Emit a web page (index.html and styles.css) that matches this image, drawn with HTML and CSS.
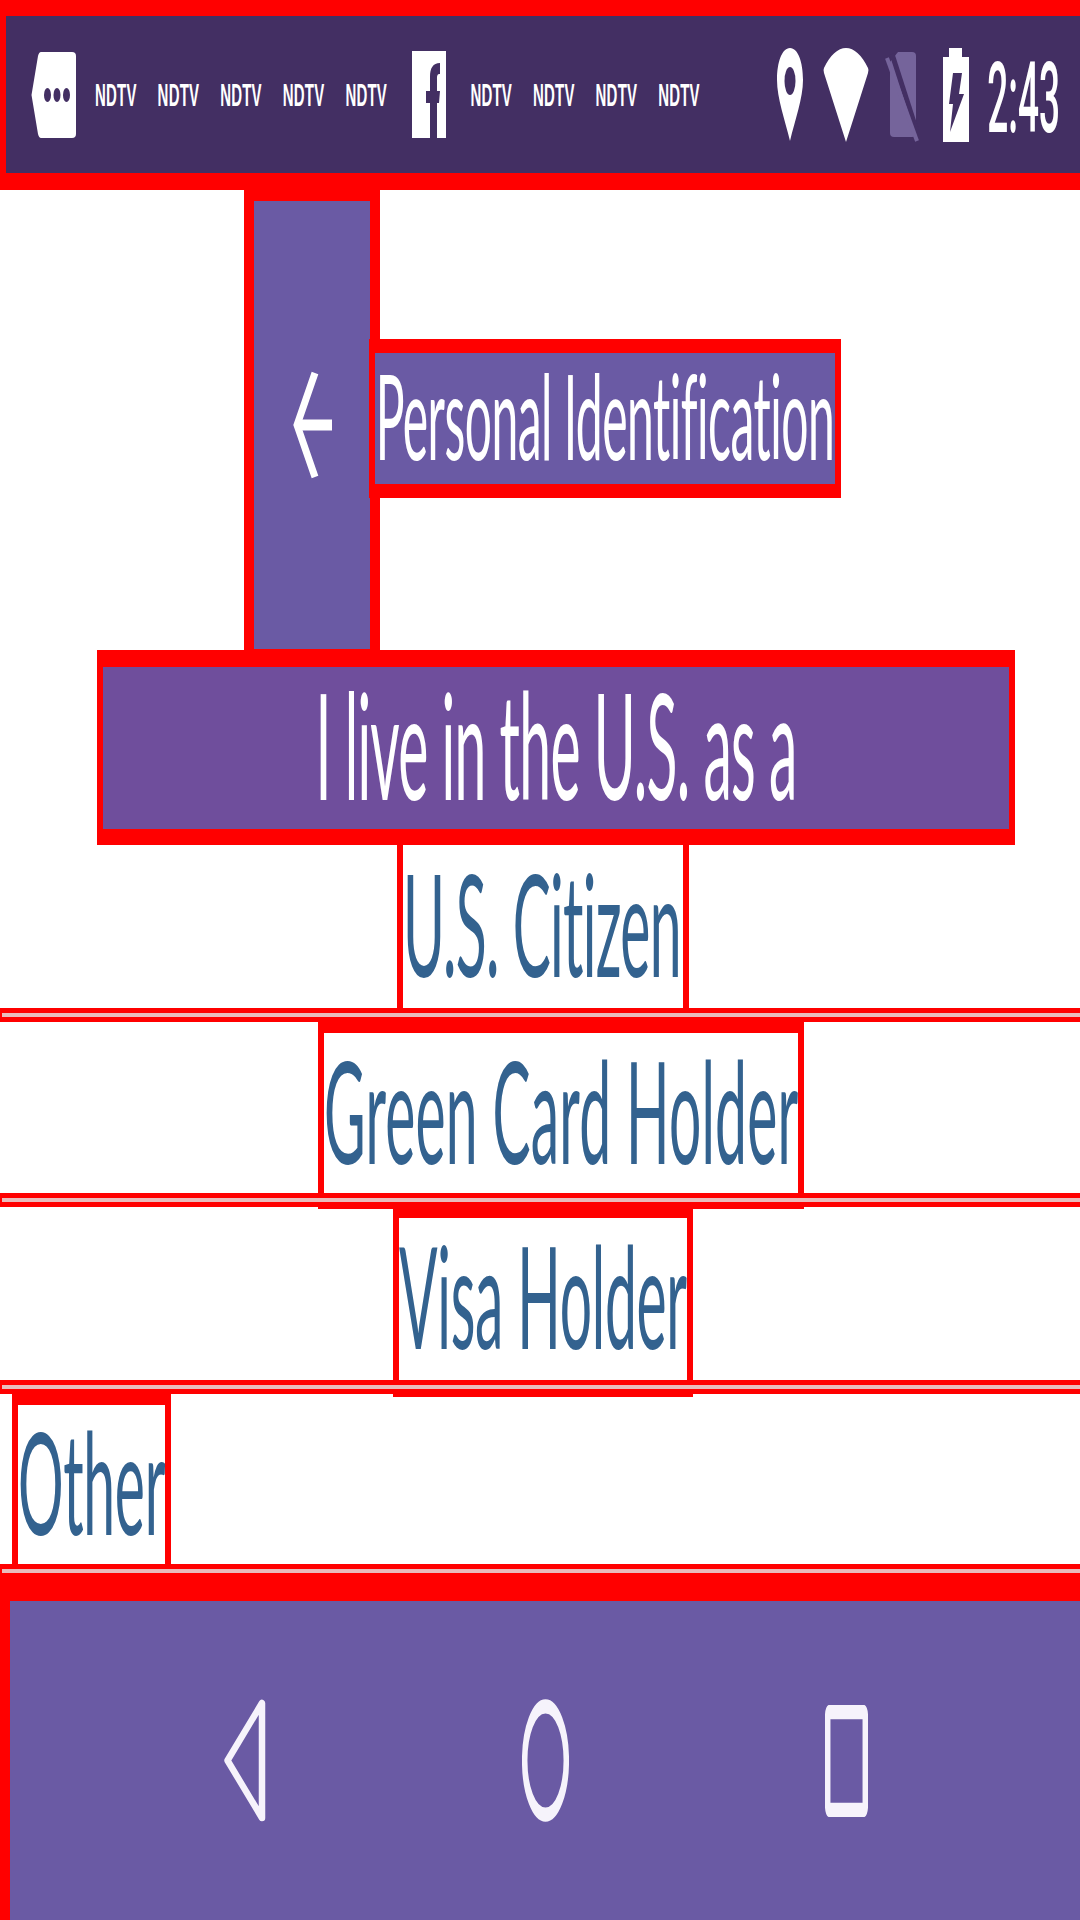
FILE: index.html
```html
<!DOCTYPE html>
<html lang="en">
<head>
    <meta charset="UTF-8">
    <meta name="viewport" content="width=device-width, initial-scale=1.0">
    <title>Personal Identification</title>
    <link rel="stylesheet" href="styles.css">
</head>
<body>
    <div class="status">
        <svg class="ic-msg" width="45" height="86" viewBox="0 0 45 86">
            <path d="M10 0H41Q45 0 45 4V82Q45 86 41 86H10Q8 86 7 82L1 46Q0 43 1 40L7 4Q8 0 10 0Z" fill="#fff"/>
            <ellipse cx="16.5" cy="43" rx="3.5" ry="7" fill="#432f63"/>
            <ellipse cx="26" cy="43" rx="3.5" ry="7" fill="#432f63"/>
            <ellipse cx="35.5" cy="43" rx="3.5" ry="7" fill="#432f63"/>
        </svg>
        <div class="ndtv-group first">
            <span class="ndtv"><span class="tall">NDTV</span></span>
            <span class="ndtv"><span class="tall">NDTV</span></span>
            <span class="ndtv"><span class="tall">NDTV</span></span>
            <span class="ndtv"><span class="tall">NDTV</span></span>
            <span class="ndtv"><span class="tall">NDTV</span></span>
        </div>
        <svg class="ic-fb" width="34" height="87" viewBox="0 0 34 87">
            <path d="M0 0H34V87H0Z" fill="#fff"/>
            <path d="M18 87V52H14V40H18V26C18 17 21 12 28 12V23C25 23 25 25 25 28V40H28L27 52H25V87Z" fill="#432f63"/>
        </svg>
        <div class="ndtv-group second">
            <span class="ndtv"><span class="tall">NDTV</span></span>
            <span class="ndtv"><span class="tall">NDTV</span></span>
            <span class="ndtv"><span class="tall">NDTV</span></span>
            <span class="ndtv"><span class="tall">NDTV</span></span>
        </div>
        <div class="status-right">
            <svg class="ic-pin" width="26" height="93" viewBox="0 0 26 93">
                <path d="M13 0C21 0 26 14 26 32C26 50 18 72 13 93C8 72 0 50 0 32C0 14 5 0 13 0Z" fill="#fff"/>
                <ellipse cx="13" cy="33" rx="5.5" ry="14" fill="#432f63"/>
            </svg>
            <svg class="ic-wifi" width="46" height="94" viewBox="0 0 46 94">
                <path d="M1 20C7 7 15 0 23 0C31 0 39 7 45 20Q46 22 45 25L23 94L1 25Q0 22 1 20Z" fill="#fff"/>
            </svg>
            <svg class="ic-sim" width="34" height="94" viewBox="0 0 34 94">
                <path d="M13 4H27Q31 4 31 8V85Q31 89 27 89H9Q5 89 5 85V14Z" fill="#75649b"/>
                <path d="M7 6L36 96" stroke="#432f63" stroke-width="5" fill="none"/>
                <path d="M2 10L32 93" stroke="#75649b" stroke-width="4" fill="none"/>
            </svg>
            <svg class="ic-batt" width="26" height="94" viewBox="0 0 26 94">
                <path d="M6 0H19V9H26V94H0V9H6Z" fill="#fff"/>
                <path d="M10 25H19L16 46H21L7 84L10 56H6Z" fill="#432f63"/>
            </svg>
            <span class="clock"><span class="tall">2:43</span></span>
        </div>
    </div>

    <div class="title-row">
        <div class="back">
            <svg width="39" height="110" viewBox="0 0 39 110">
                <path d="M22 3L4 55L22 107" stroke="#fff" stroke-width="7" fill="none"/>
                <path d="M5 55H39" stroke="#fff" stroke-width="11" fill="none"/>
            </svg>
        </div>
        <div class="title"><span class="tall">Personal Identification</span></div>
    </div>

    <div class="heading"><span class="tall">I live in the U.S. as a</span></div>

    <div class="option citizen"><span class="tall">U.S. Citizen</span></div>
    <div class="divider"></div>
    <div class="option green"><span class="tall">Green Card Holder</span></div>
    <div class="divider"></div>
    <div class="option visa"><span class="tall">Visa Holder</span></div>
    <div class="divider"></div>
    <div class="option other"><span class="tall">Other</span></div>
    <div class="divider"></div>

    <div class="navbar">
        <svg width="42" height="125" viewBox="0 0 42 125">
            <path d="M38 5V120L3.5 62.5Z" stroke="#f6f3fb" stroke-width="6.5" stroke-linejoin="round" fill="none"/>
        </svg>
        <svg width="47" height="125" viewBox="0 0 47 48" preserveAspectRatio="none">
            <circle cx="23.5" cy="24" r="20.8" stroke="#f6f3fb" stroke-width="5.5" fill="none"/>
        </svg>
        <svg width="43" height="112" viewBox="0 0 43 43" preserveAspectRatio="none">
            <rect x="2.7" y="2.7" width="37.6" height="37.6" rx="1.5" stroke="#f6f3fb" stroke-width="5.5" fill="none"/>
        </svg>
    </div>
</body>
</html>
```
FILE: styles.css
```css
html, body {
    margin: 0;
    padding: 0;
}
body {
    width: 1080px;
    height: 1920px;
    overflow: hidden;
    background-color: #fff;
    font-family: Lato, "Open Sans", sans-serif;
}
svg {
    display: block;
    flex: none;
}

/* the whole screenshot is stretched vertically, text included */
.tall {
    display: inline-block;
    line-height: 1;
    white-space: nowrap;
    transform: scaleY(2.47);
}

.status {
    box-sizing: border-box;
    height: 190px;
    display: flex;
    align-items: center;
    padding-left: 25px;
    border: solid #f00;
    border-width: 16px 0 17px 6px;
    background-color: #432f63;
    color: #fff;
}
.ndtv-group {
    display: flex;
    gap: 21.6px;
}
.ndtv-group.first {
    margin-left: 19px;
    margin-right: 26px;
}
.ndtv-group.second {
    margin-left: 24px;
}
.ndtv {
    width: 41px;
    font-family: "Liberation Sans", sans-serif;
    font-size: 15px;
    font-weight: bold;
    letter-spacing: 0.2px;
}
.ndtv .tall {
    transform: scaleY(2.15);
}
.status-right {
    display: flex;
    align-items: center;
    margin-left: 78px;
}
.ic-wifi {
    margin-left: 20px;
}
.ic-sim {
    margin-left: 16px;
}
.ic-batt {
    margin-left: 24px;
}
.clock {
    margin-left: 18px;
    padding-top: 8px;
    font-family: Roboto, sans-serif;
    font-size: 37px;
    font-weight: 500;
}
.clock .tall {
    transform: scaleY(2.65);
}

.title-row {
    height: 460px;
    display: flex;
    align-items: center;
    padding-left: 244px;
}
.back {
    box-sizing: border-box;
    width: 136px;
    height: 460px;
    display: flex;
    align-items: center;
    justify-content: center;
    border: solid #f00;
    border-width: 11px 10px 1px;
    background-color: #6a5aa4;
}
.title {
    box-sizing: border-box;
    width: 472px;
    height: 159px;
    margin-left: -11px;
    margin-bottom: 3px;
    padding-bottom: 5px;
    display: flex;
    align-items: center;
    justify-content: center;
    border: solid #f00;
    border-width: 14px 6px;
    background-color: #6a5aa4;
    color: #fff;
    font-size: 48px;
    letter-spacing: -0.5px;
}

.heading {
    box-sizing: border-box;
    width: 918px;
    height: 195px;
    margin-left: 97px;
    padding-bottom: 7px;
    display: flex;
    align-items: center;
    justify-content: center;
    border: solid #f00;
    border-width: 17px 6px 16px;
    background-color: #6f4e9c;
    color: #fff;
    font-size: 57px;
    letter-spacing: -0.7px;
}
.heading .tall {
    transform: scaleY(2.58);
}

.option {
    box-sizing: content-box;
    width: fit-content;
    display: flex;
    align-items: center;
    border: solid #f00;
    border-width: 0 6px;
    color: #33628f;
    font-size: 57px;
}
.citizen {
    height: 163px;
    margin-left: 397px;
    padding-right: 2px;
    letter-spacing: -0.7px;
}
.citizen .tall, .other .tall {
    margin-bottom: 6px;
}
.green {
    height: 160px;
    margin: -5px 0 -16px 318px;
    border-width: 16px 6px;
    letter-spacing: 0.2px;
}
.green .tall {
    margin-bottom: 5px;
}
.visa {
    height: 162px;
    margin: 0 0 -17px 393px;
    border-width: 11px 6px 17px;
    letter-spacing: -0.3px;
}
.visa .tall {
    margin-bottom: 8px;
}
.other {
    height: 159px;
    margin-left: 12px;
    border-top-width: 11px;
    letter-spacing: -0.3px;
}
.divider {
    position: relative;
    box-sizing: border-box;
    height: 14px;
    border: solid #f00;
    border-width: 5px 0 5px 2px;
    background-color: #e9bcbc;
}

.navbar {
    box-sizing: border-box;
    height: 342px;
    display: flex;
    align-items: center;
    gap: 256px;
    padding-left: 214px;
    border: solid #f00;
    border-width: 23px 0 0 10px;
    background-color: #6a5aa4;
}
```
